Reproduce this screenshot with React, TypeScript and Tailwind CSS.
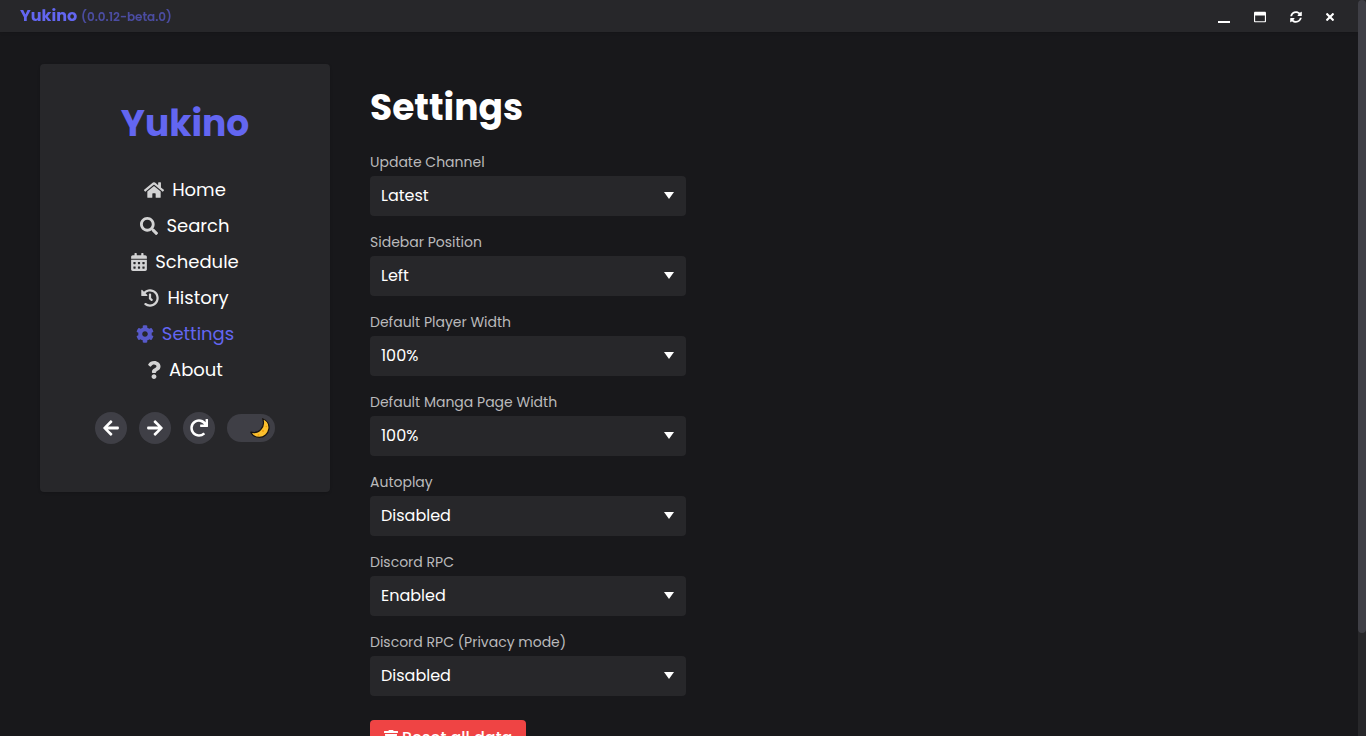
import { useState } from "react";
import {
  FaArrowLeft,
  FaArrowRight,
  FaCalendarAlt,
  FaCog,
  FaHistory,
  FaHome,
  FaQuestion,
  FaRedo,
  FaRegWindowMaximize,
  FaSearch,
  FaSyncAlt,
  FaTimes,
  FaTrash,
} from "react-icons/fa";

const links = [
  { name: "Home", icon: FaHome, size: "h-[18px] w-5" },
  { name: "Search", icon: FaSearch, size: "h-[18px] w-[18px]" },
  { name: "Schedule", icon: FaCalendarAlt, size: "h-[18px] w-4" },
  { name: "History", icon: FaHistory, size: "h-[18px] w-[18px]" },
  { name: "Settings", icon: FaCog, size: "h-[18px] w-[18px]" },
  { name: "About", icon: FaQuestion, size: "h-[18px] w-3.5" },
];

const onOff = ["Enabled", "Disabled"];
const widths = ["100%", "75%", "50%", "25%"];

const fields = [
  { id: "update-channel", label: "Update Channel", value: "Latest", options: ["Latest", "Beta"] },
  { id: "sidebar-position", label: "Sidebar Position", value: "Left", options: ["Left", "Right"] },
  { id: "player-width", label: "Default Player Width", value: "100%", options: widths },
  { id: "manga-width", label: "Default Manga Page Width", value: "100%", options: widths },
  { id: "autoplay", label: "Autoplay", value: "Disabled", options: onOff },
  { id: "discord-rpc", label: "Discord RPC", value: "Enabled", options: onOff },
  { id: "discord-rpc-privacy", label: "Discord RPC (Privacy mode)", value: "Disabled", options: onOff },
];

function TitleBar() {
  return (
    <header className="sticky top-0 z-10 flex h-8 items-center justify-between bg-[#27272a] pr-6 pl-5 shadow">
      <div className="flex items-baseline gap-1 leading-6">
        <span className="text-base font-bold text-[#6366f1]">Yukino</span>
        <span className="text-xs font-semibold text-[#6366f1] opacity-60">(0.0.12-beta.0)</span>
      </div>
      <div className="flex items-center gap-6 pt-0.5 text-xs text-white">
        <button type="button" aria-label="Minimize" className="flex h-3 w-3 items-end">
          <span className="h-0.5 w-3 bg-white" />
        </button>
        <button type="button" aria-label="Maximize">
          <FaRegWindowMaximize />
        </button>
        <button type="button" aria-label="Reload window">
          <FaSyncAlt />
        </button>
        <button type="button" aria-label="Close">
          <FaTimes className="h-3 w-2" />
        </button>
      </div>
    </header>
  );
}

function Moon() {
  return (
    <svg viewBox="0 0 20 20" className="h-5 w-5" aria-hidden="true">
      <path
        d="M12.6 0.700C17 2.300 19.600 6.400 18.900 10.900C18.200 15.800 14.100 19.300 9.400 19.300C5.600 19.300 2.300 17.300 0.800 14.200C4.500 15.200 8.300 14.300 10.700 11.600C13.300 8.700 14.200 4.500 12.600 0.700Z"
        fill="#fcc02e"
        stroke="#171310"
        strokeWidth="1.200"
        strokeLinejoin="round"
      />
      <circle cx="13" cy="13" r="1" fill="#f59e0b" />
      <circle cx="8.500" cy="16.800" r="0.900" fill="#f59e0b" />
      <circle cx="16.300" cy="8.500" r="0.800" fill="#f59e0b" />
    </svg>
  );
}

function Sidebar() {
  const round = "flex h-8 w-8 items-center justify-center rounded-full bg-[#3f3f46] text-lg text-white";
  return (
    <aside className="flex w-[290px] shrink-0 flex-col items-center rounded bg-[#27272a] px-8 pt-8 pb-12 shadow">
      <p className="text-4xl leading-[56px] font-bold text-[#6366f1]">Yukino</p>
      <nav className="mt-5 flex flex-col items-center">
        {links.map(({ name, icon: Icon, size }) => (
          <a
            key={name}
            href={"#" + name.toLowerCase()}
            className={
              name === "Settings"
                ? "flex h-9 items-center gap-2 text-lg text-[#6366f1]"
                : "flex h-9 items-center gap-2 text-lg text-white"
            }
          >
            <span className="opacity-80">
              <Icon className={size} />
            </span>
            {name}
          </a>
        ))}
      </nav>
      <div className="mt-6 flex items-center gap-3">
        <button type="button" aria-label="Back" className={round}>
          <FaArrowLeft />
        </button>
        <button type="button" aria-label="Forward" className={round}>
          <FaArrowRight />
        </button>
        <button type="button" aria-label="Reload" className={round}>
          <FaRedo />
        </button>
        <button
          type="button"
          aria-label="Toggle dark mode"
          className="flex h-7 w-12 items-center justify-end rounded-full bg-[#3f3f46] pr-[5px]"
        >
          <Moon />
        </button>
      </div>
    </aside>
  );
}

function Field({ id, label, value, options }: { id: string; label: string; value: string; options: string[] }) {
  const [current, setCurrent] = useState(value);
  return (
    <div className="flex h-20 flex-col">
      <label htmlFor={id} className="h-6 text-sm leading-5 text-[#bababb]">
        {label}
      </label>
      <div className="grid items-center">
        <select
          id={id}
          value={current}
          onChange={(e) => setCurrent(e.target.value)}
          className="col-start-1 row-start-1 h-10 w-full appearance-none rounded bg-[#27272a] px-[11px] text-base text-white"
        >
          {options.map((o) => (
            <option key={o}>{o}</option>
          ))}
        </select>
        <svg
          viewBox="0 0 10 8"
          className="pointer-events-none col-start-1 row-start-1 mr-3 h-2 w-2.5 justify-self-end"
          aria-hidden="true"
        >
          <path d="M0 0H10L5 7Z" fill="#fff" />
        </svg>
      </div>
    </div>
  );
}

export default function App() {
  return (
    <div className="flex h-screen bg-[#18181b] font-['Poppins','Inter',sans-serif]">
      <div className="min-w-0 flex-1 overflow-y-auto [scrollbar-width:none]">
        <TitleBar />
        <div className="flex items-start gap-10 px-10 pt-8 pb-20">
          <Sidebar />
          <main className="min-w-0 flex-1 pt-4">
            <h1 className="text-4xl leading-[56px] font-bold text-white">Settings</h1>
            <form className="mt-4 w-[316px] max-w-full">
              {fields.map((f) => (
                <Field key={f.id} {...f} />
              ))}
              <button
                type="button"
                className="mt-2 flex h-9 items-center gap-1 rounded bg-[#ef4444] px-3.5 text-base font-medium text-white"
              >
                <FaTrash className="h-4 w-3.5" />
                Reset all data
              </button>
            </form>
          </main>
        </div>
      </div>
      <div className="w-2 shrink-0 bg-[#27272a]" aria-hidden="true">
        <div className="h-[86%] rounded-full bg-[#3f3f46]" />
      </div>
    </div>
  );
}
